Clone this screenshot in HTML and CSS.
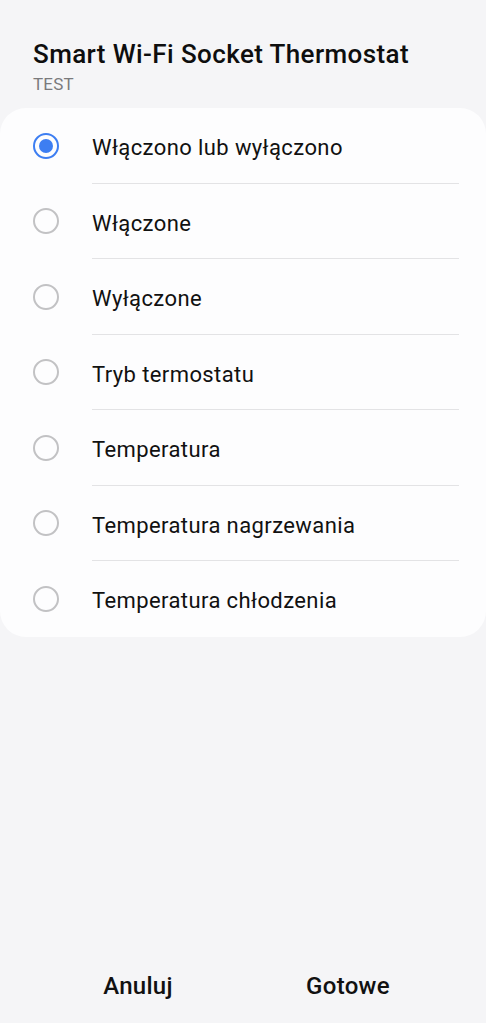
FILE: index.html
```html
<!DOCTYPE html>
<html lang="pl">
<head>
<meta charset="utf-8">
<link rel="stylesheet" href="styles.css">
</head>
<body>
<div class="page">
  <header class="header">
    <h1 class="title">Smart Wi-Fi Socket Thermostat</h1>
    <div class="subtitle">TEST</div>
  </header>
  <div class="card">
    <div class="row"><span class="radio selected"></span><span class="label">Włączono lub wyłączono</span></div>
    <div class="row"><span class="radio"></span><span class="label">Włączone</span></div>
    <div class="row"><span class="radio"></span><span class="label">Wyłączone</span></div>
    <div class="row"><span class="radio"></span><span class="label">Tryb termostatu</span></div>
    <div class="row"><span class="radio"></span><span class="label">Temperatura</span></div>
    <div class="row"><span class="radio"></span><span class="label">Temperatura nagrzewania</span></div>
    <div class="row last"><span class="radio"></span><span class="label">Temperatura chłodzenia</span></div>
  </div>
  <footer class="footer">
    <button class="btn">Anuluj</button>
    <button class="btn">Gotowe</button>
  </footer>
</div>
</body>
</html>
```
FILE: styles.css
```css
* { box-sizing: border-box; }
html, body { margin: 0; padding: 0; }
body {
  background: #f5f5f7;
  font-family: Roboto, "Noto Sans", "Liberation Sans", sans-serif;
  color: #111;
}
.page {
  min-height: 1023px;
  display: flex;
  flex-direction: column;
}
.header {
  padding: 38px 33px 0 33px;
  height: 108px;
}
.title {
  margin: 0;
  font-size: 26px;
  font-weight: 500;
  line-height: 32px;
  color: #0e0e0e;
  letter-spacing: 0.4px;
}
.subtitle {
  margin-top: 4px;
  font-size: 17px;
  line-height: 20px;
  color: #7a7a7c;
  letter-spacing: 0.2px;
}
.card {
  background: #fdfdfe;
  border-radius: 26px;
}
.row {
  display: flex;
  align-items: center;
  height: 75.5px;
  position: relative;
}
.row::after {
  content: "";
  position: absolute;
  left: 92px;
  right: 27px;
  bottom: 0;
  height: 1px;
  background: #e3e3e5;
}
.row.last::after { display: none; }
.radio {
  width: 26px;
  height: 26px;
  border-radius: 50%;
  border: 2px solid #c2c2c4;
  margin-left: 33px;
  margin-right: 33px;
  flex: none;
  display: flex;
  align-items: center;
  justify-content: center;
}
.radio.selected {
  border: 2.5px solid #3d7ef2;
}
.radio.selected::before {
  content: "";
  width: 14px;
  height: 14px;
  border-radius: 50%;
  background: #3d7ef2;
}
.label {
  font-size: 22px;
  color: #111;
  letter-spacing: 0.4px;
  padding-top: 4px;
}
.footer {
  margin-top: auto;
  display: flex;
  padding: 0 33px;
  height: 74px;
  align-items: center;
}
.btn {
  flex: 1;
  background: none;
  border: none;
  font-family: inherit;
  font-size: 24px;
  font-weight: 500;
  color: #111;
  padding: 0;
  letter-spacing: 0.3px;
}
```
